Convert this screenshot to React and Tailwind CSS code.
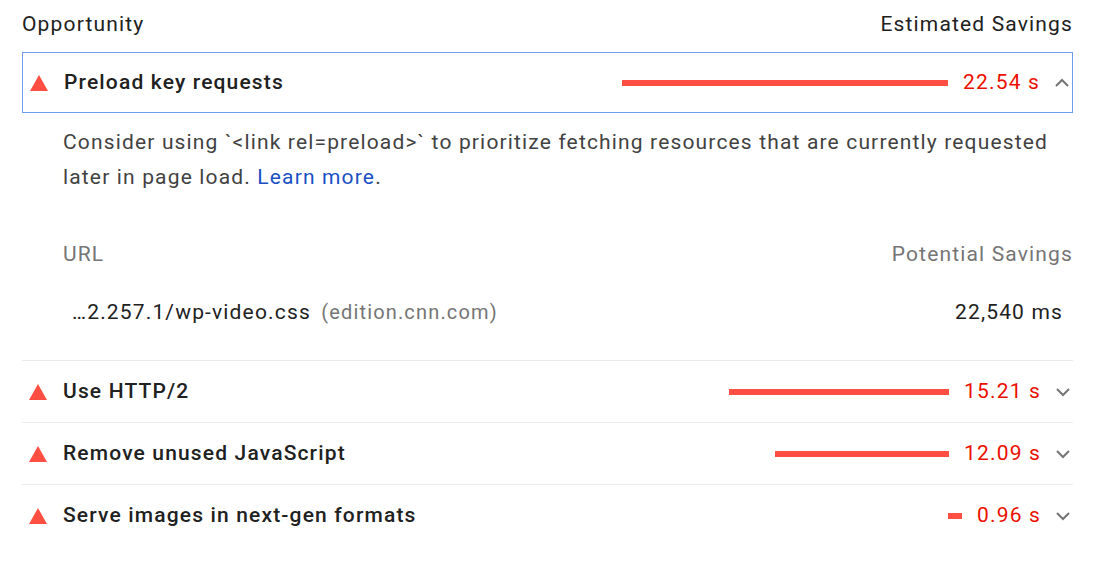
import React from "react";

const Tri = () => (
  <svg width="18" height="16" viewBox="0 0 18 16" className="shrink-0"><polygon points="9,0 18,16 0,16" fill="#ff4e42" /></svg>
);
const Chev = ({ up }) => (
  <svg width="16" height="10" viewBox="0 0 16 10" className="shrink-0">
    <polyline points={up ? "2,8 8,2 14,8" : "2,2 8,8 14,2"} fill="none" stroke="#757575" strokeWidth="2" />
  </svg>
);

function Row({ title, bar, value, up, boxed }) {
  return (
    <div className={`flex items-center pl-[7px] pr-[2px] ${boxed ? "border border-[#6d9eeb] h-[61px]" : "h-[61px]"}`}>
      <Tri />
      <div className="ml-[16px] font-medium text-[#212121]">{title}</div>
      <div className="flex-1" />
      <div className="h-[6px] bg-[#ff4e42]" style={{ width: bar }} />
      <div className="ml-[15px] text-[#eb0f00]">{value}</div>
      <div className="ml-[14px] mr-[0px]"><Chev up={up} /></div>
    </div>
  );
}

export default function App() {
  return (
    <div className="w-[1100px] h-[563px] bg-white text-[21px] tracking-[0.055em]" style={{ fontFamily: "Roboto, sans-serif" }}>
      <div className="mx-[22px] w-[1051px]">
        <div className="flex justify-between text-[#212121] h-[52px] leading-[48px]">
          <span>Opportunity</span><span>Estimated Savings</span>
        </div>
        <Row title="Preload key requests" bar={326} value="22.54 s" up boxed />
        <div className="pl-[41px] pt-[12px] text-[#424242] leading-[35px]">
          Consider using `&lt;link rel=preload&gt;` to prioritize fetching resources that are currently requested later in page load. <span className="text-[#1a4fc4]">Learn more</span>.
        </div>
        <div className="flex justify-between pl-[41px] text-[#757575] mt-[44px] leading-[30px]">
          <span>URL</span><span>Potential Savings</span>
        </div>
        <div className="flex justify-between items-center pl-[50px] pr-[10px] h-[92px] text-[#212121] border-b border-[#ebebeb] pb-[4px]">
          <span>…2.257.1/wp-video.css <span className="text-[#757575] ml-[4px] text-[20px]">(edition.cnn.com)</span></span>
          <span>22,540 ms</span>
        </div>
        <div className="border-b border-[#ebebeb]"><Row title="Use HTTP/2" bar={220} value="15.21 s" /></div>
        <div className="border-b border-[#ebebeb]"><Row title="Remove unused JavaScript" bar={174} value="12.09 s" /></div>
        <Row title="Serve images in next-gen formats" bar={14} value="0.96 s" />
      </div>
    </div>
  );
}
